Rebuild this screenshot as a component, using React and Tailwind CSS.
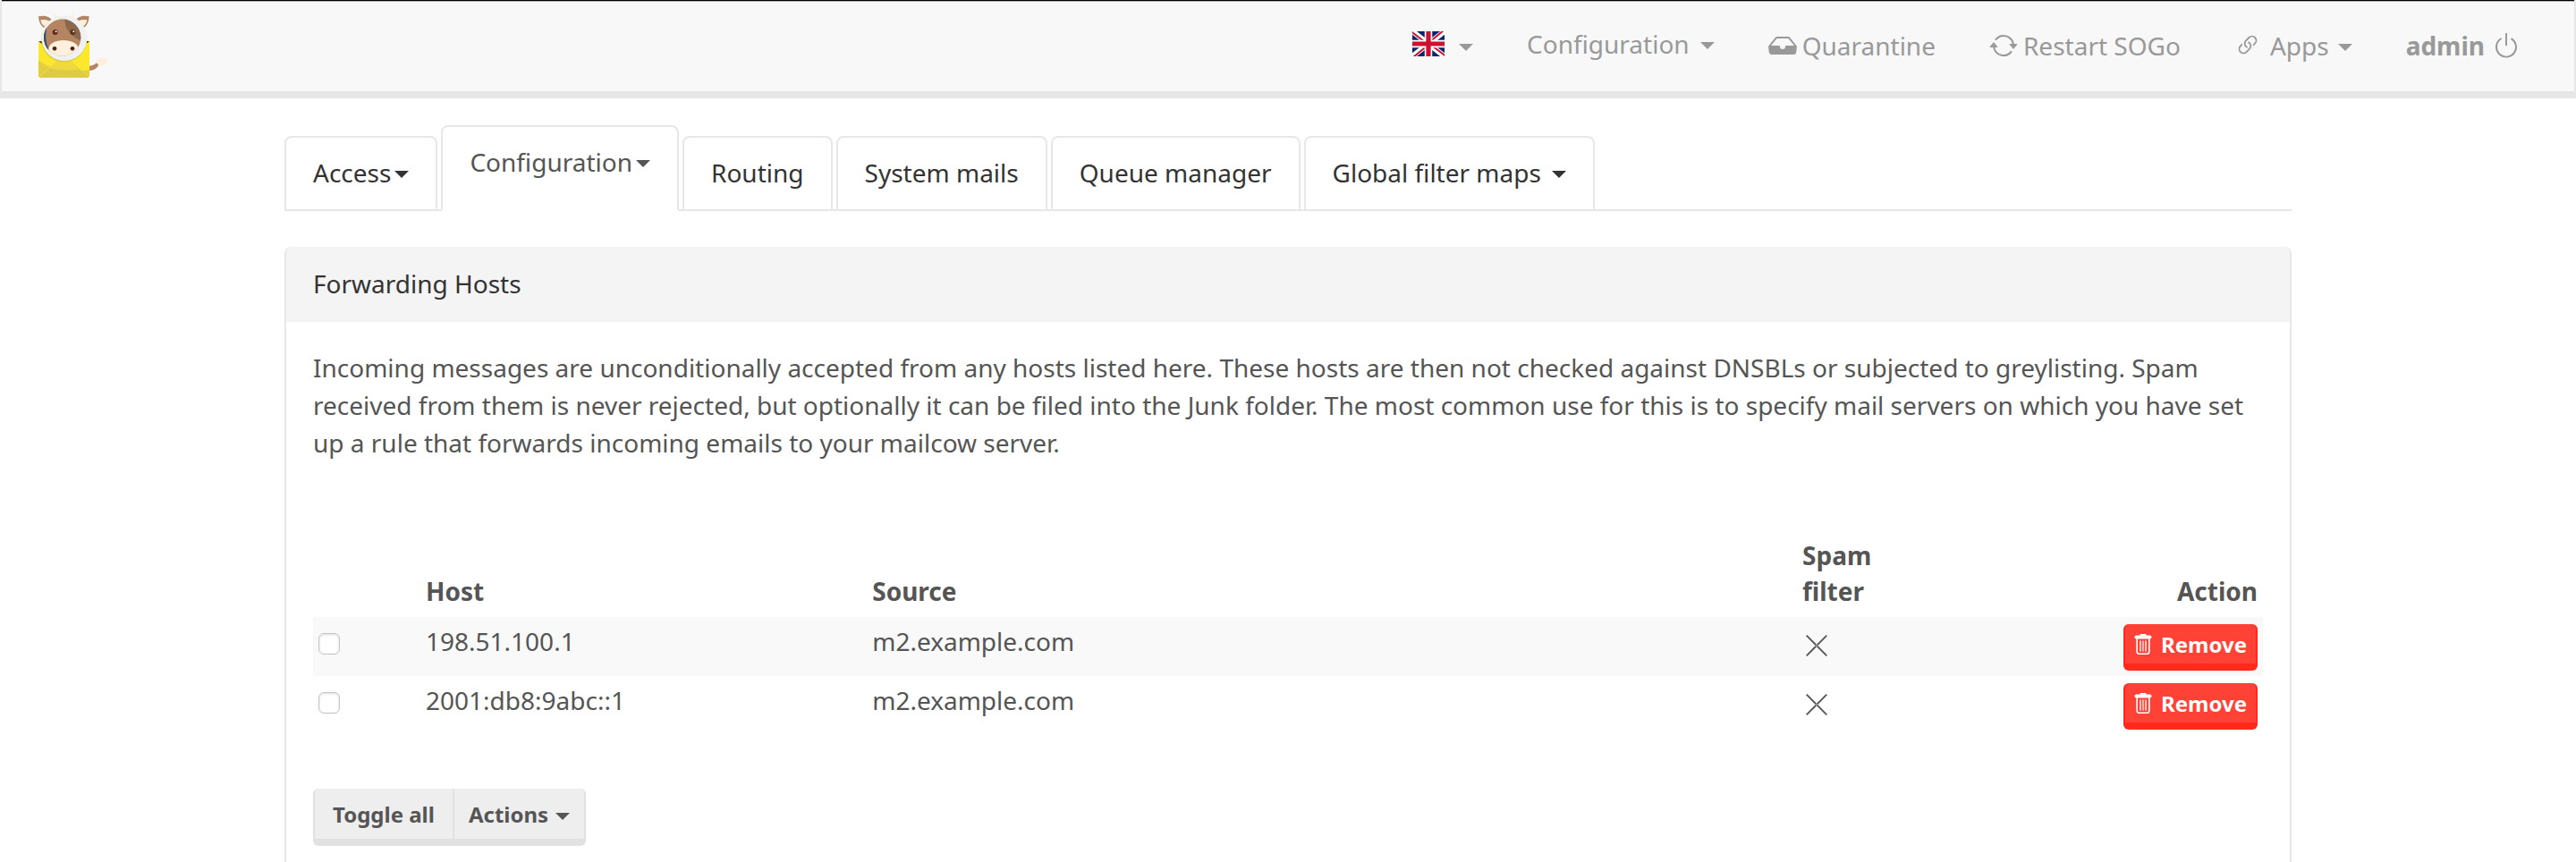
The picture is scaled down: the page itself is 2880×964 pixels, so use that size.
import React from "react";
import { BsInboxFill, BsArrowRepeat, BsLink45Deg, BsPower } from "react-icons/bs";

function Caret() {
  return (
    <span
      aria-hidden="true"
      className="mt-1 inline-block h-0 w-0 shrink-0 border-x-8 border-t-8 border-x-transparent border-t-current"
    />
  );
}

function Logo() {
  return (
    <svg viewBox="120 30 252 240" className="h-20 w-[84px]" role="img" aria-label="mailcow">
      <defs>
        <clipPath id="face">
          <circle cx="209" cy="129" r="62" />
        </clipPath>
        <clipPath id="envelope">
          <path d="M129 141H300V255Q300 263 292 263H137Q129 263 129 255Z" />
        </clipPath>
      </defs>
      <path d="M130 141H300L290 165H140Z" fill="#4f2f22" />
      <path d="M179 38Q177 68 203 66L190 55Q181 50 179 38Z" fill="#fdf0dc" />
      <path d="M249 38Q253 68 227 66L238 55Q247 50 249 38Z" fill="#fdf0dc" />
      <path d="M129 58Q158 52 173 68L147 96Q131 86 129 58Z" fill="#b58563" />
      <path d="M136 70Q154 66 167 74L150 91Q139 86 136 70Z" fill="#fff0dd" />
      <path d="M299 58Q270 52 255 68L281 96Q297 86 299 58Z" fill="#b58563" />
      <path d="M292 70Q274 66 261 74L278 91Q289 86 292 70Z" fill="#fff0dd" />
      <path d="M300 224Q317 222 325 212L332 219Q322 240 300 240Z" fill="#b58563" />
      <path
        d="M324 214C320 198 333 203 338 193C340 193 341 197 344 199Q354 200 366 196Q357 205 359 212Q355 223 342 224Q330 225 324 214Z"
        fill="#fff0dd"
      />
      <g clipPath="url(#envelope)">
        <path d="M129 141L190 190H240L300 141V265H129Z" fill="#fbe82c" />
        <path d="M129 206Q200 250 300 238V265H129Z" fill="#efd83a" />
        <path d="M129 206Q160 233 200 238L300 240V265H129Z" fill="#e4ce3d" />
        <path d="M134 263L190 209H240L297 263Z" fill="#ddca48" />
        <path d="M165 232L190 207H240L268 235Q215 244 165 232Z" fill="#f0d93c" />
        <path d="M132 260L192 205M298 260L238 205" fill="none" stroke="#f0e06a" strokeWidth="2" />
      </g>
      <circle cx="215" cy="135" r="76" fill="#d9cb40" />
      <circle cx="216" cy="131" r="76" fill="#f0f2f2" />
      <g clipPath="url(#face)">
        <rect x="140" y="60" width="140" height="140" fill="#b58563" />
        <path d="M217 60Q214 115 270 139H285V60Z" fill="#8c674b" />
        <path d="M140 90H158Q148 130 161 175H140Z" fill="#34506b" />
        <path d="M146 100Q151 138 167 180L150 160Z" fill="#34506b" />
        <ellipse cx="213" cy="167" rx="50" ry="29" fill="#fff0dd" />
      </g>
      <circle cx="185" cy="111" r="9" fill="#5d2f1b" />
      <circle cx="244" cy="111" r="9" fill="#5d2f1b" />
      <circle cx="188" cy="109" r="3" fill="#fff" />
      <circle cx="247" cy="109" r="3" fill="#fff" />
      <circle cx="183" cy="166" r="7" fill="#4e2413" />
      <circle cx="243" cy="166" r="7" fill="#4e2413" />
    </svg>
  );
}

function Flag() {
  return (
    <svg viewBox="0 0 36 28" className="h-7 w-9" role="img" aria-label="English">
      <rect width="36" height="28" fill="#0a2472" />
      <path d="M0 0L36 28M36 0L0 28" stroke="#fff" strokeWidth="6" />
      <path d="M-1 0.500L18 15M37 27.500L18 13M35 -1L18 13M1 29L18 15" stroke="#ce1130" strokeWidth="2" />
      <path d="M18 0V28M0 14H36" stroke="#fff" strokeWidth="8.500" />
      <path d="M18 0V28M0 14H36" stroke="#ce1130" strokeWidth="5.200" />
    </svg>
  );
}

function TrashIcon() {
  return (
    <svg viewBox="0 0 20 24" className="h-6 w-5" fill="none" stroke="#fff" aria-hidden="true">
      <path d="M2.500 3.500H17.500" strokeWidth="4" strokeLinecap="round" />
      <path d="M7.500 1H12.500" strokeWidth="2" strokeLinecap="round" />
      <path d="M3.200 5V20Q3.200 22.200 5.400 22.200H14.600Q16.800 22.200 16.800 20V5" strokeWidth="1.600" />
      <path d="M7 8V19M10 8V19M13 8V19" strokeWidth="1.300" strokeLinecap="round" />
    </svg>
  );
}

function CrossIcon() {
  return (
    <svg viewBox="0 0 24 24" className="ml-1 size-6" fill="none" stroke="currentColor" strokeWidth="1.800" role="img" aria-label="No">
      <path d="M0.700 0.700L11 11M13 13L23.300 23.300M23.300 0.700L13 11M11 13L0.700 23.300" />
      <circle cx="12" cy="12" r="1.200" strokeWidth="1" />
    </svg>
  );
}

function Navbar() {
  return (
    <header className="border-x-2 border-b-8 border-[#e7e7e7] border-b-[#e6e6e6] bg-[#f8f8f8]">
      <div className="h-px bg-black" />
      <div className="h-px bg-[#b0b0b0]" />
      <div className="flex h-[100px] items-center justify-between pr-[60px] pb-1.5 pl-[38px]">
        <a href="#home">
          <Logo />
        </a>
        <nav className="flex items-center gap-[60px] leading-10 text-[#999999]">
          <button type="button" className="flex items-center gap-4" aria-label="Language">
            <Flag />
            <span className="flex pt-1">
              <Caret />
            </span>
          </button>
          <button type="button" className="flex items-center gap-3">
            Configuration <Caret />
          </button>
          <a href="#quarantine" className="flex items-center gap-1.5 pt-1">
            <BsInboxFill className="size-8" />
            Quarantine
          </a>
          <a href="#restart" className="flex items-center gap-1.5 pt-1">
            <BsArrowRepeat className="size-8" />
            Restart SOGo
          </a>
          <button type="button" className="flex items-center gap-2.5 pt-1">
            <BsLink45Deg className="size-[30px]" />
            Apps <Caret />
          </button>
          <a href="#logout" className="flex items-center gap-2 pt-1">
            <b>admin</b>
            <BsPower className="size-8" />
          </a>
        </nav>
      </div>
    </header>
  );
}

const tabs = [
  { label: "Access", caret: "tight" },
  { label: "Configuration", caret: "tight", active: true },
  { label: "Routing" },
  { label: "System mails" },
  { label: "Queue manager" },
  { label: "Global filter maps", caret: "wide" },
];

function Tabs() {
  return (
    <ul className="flex items-end gap-1 border-b-2 border-[#e7e7e7]">
      {tabs.map((tab) => (
        <li key={tab.label} className="-mb-0.5">
          <button
            type="button"
            className={
              "flex items-center rounded-t-lg border-2 border-[#e7e7e7] px-[30px] pt-[19px] leading-10 " +
              (tab.active ? "border-b-white bg-white pb-[33px] text-[#555555] " : "pb-[21px] text-[#333333] ") +
              (tab.caret === "tight" ? "gap-1" : "gap-3")
            }
          >
            {tab.label}
            {tab.caret && <Caret />}
          </button>
        </li>
      ))}
    </ul>
  );
}

const hosts = [
  { host: "198.51.100.1", source: "m2.example.com" },
  { host: "2001:db8:9abc::1", source: "m2.example.com" },
];

function HostTable() {
  return (
    <table className="w-full table-fixed">
      <thead>
        <tr className="text-left align-bottom leading-10">
          <th className="w-[120px]" aria-label="Select" />
          <th className="w-[22.9%] px-1.5 pb-[9px]">Host</th>
          <th className="w-[47.7%] px-1.5 pb-[9px]">Source</th>
          <th className="w-[110px] px-1.5 pb-[9px]">Spam filter</th>
          <th className="px-1.5 pb-[9px] text-right">Action</th>
        </tr>
      </thead>
      <tbody>
        {hosts.map((row) => (
          <tr key={row.host} className="align-top leading-10 odd:bg-[#f9f9f9]">
            <td className="px-1.5 pt-[18px]">
              <input
                type="checkbox"
                aria-label={"Select " + row.host}
                className="block size-6 appearance-none rounded-md border border-[#c4c4c4] bg-white shadow-[inset_0_1px_3px_#dddddd]"
              />
            </td>
            <td className="px-1.5 pt-[7px]">{row.host}</td>
            <td className="px-1.5 pt-[7px]">{row.source}</td>
            <td className="px-1.5 pt-5">
              <CrossIcon />
            </td>
            <td className="px-1.5 pt-2 pb-1.5">
              <button
                type="button"
                className="ml-auto flex items-center gap-2.5 rounded-md border-2 border-t-0 border-b-8 border-[#ff291c] bg-[#ff4136] px-2.5 pt-[5px] pb-[3px] text-2xl leading-9 font-bold text-white"
              >
                <TrashIcon />
                Remove
              </button>
            </td>
          </tr>
        ))}
      </tbody>
    </table>
  );
}

export default function App() {
  return (
    <div className="bg-white font-['Noto_Sans',sans-serif] text-[28px] text-[#555555]">
      <Navbar />
      <main className="mx-auto max-w-[2244px] pt-[30px]">
        <Tabs />
        <section className="mt-10 rounded-t-lg border-x-2 border-[#e7e7e7]">
          <h1 className="rounded-t-md bg-[#f4f4f4] px-[30px] pt-[19px] pb-[21px] leading-11 text-[#333333]">
            Forwarding Hosts
          </h1>
          <div className="px-[30px] pt-[30px] pb-5">
            <p className="mb-[85px] leading-[42px]">
              Incoming messages are unconditionally accepted from any hosts listed here. These hosts are then not
              checked against DNSBLs or subjected to greylisting. Spam received from them is never rejected, but
              optionally it can be filed into the Junk folder. The most common use for this is to specify mail
              servers on which you have set up a rule that forwards incoming emails to your mailcow server.
            </p>
            <HostTable />
            <div className="mt-[60px] flex text-2xl leading-9 font-bold">
              <button
                type="button"
                className="rounded-l-md border-2 border-t-0 border-b-8 border-[#e1e1e1] bg-[#eeeeee] px-5 pt-[11px] pb-[9px]"
              >
                Toggle all
              </button>
              <button
                type="button"
                className="-ml-0.5 flex items-center gap-2 rounded-r-md border-2 border-t-0 border-b-8 border-[#e1e1e1] bg-[#eeeeee] px-4 pt-[11px] pb-[9px]"
              >
                Actions <Caret />
              </button>
            </div>
          </div>
        </section>
      </main>
    </div>
  );
}
